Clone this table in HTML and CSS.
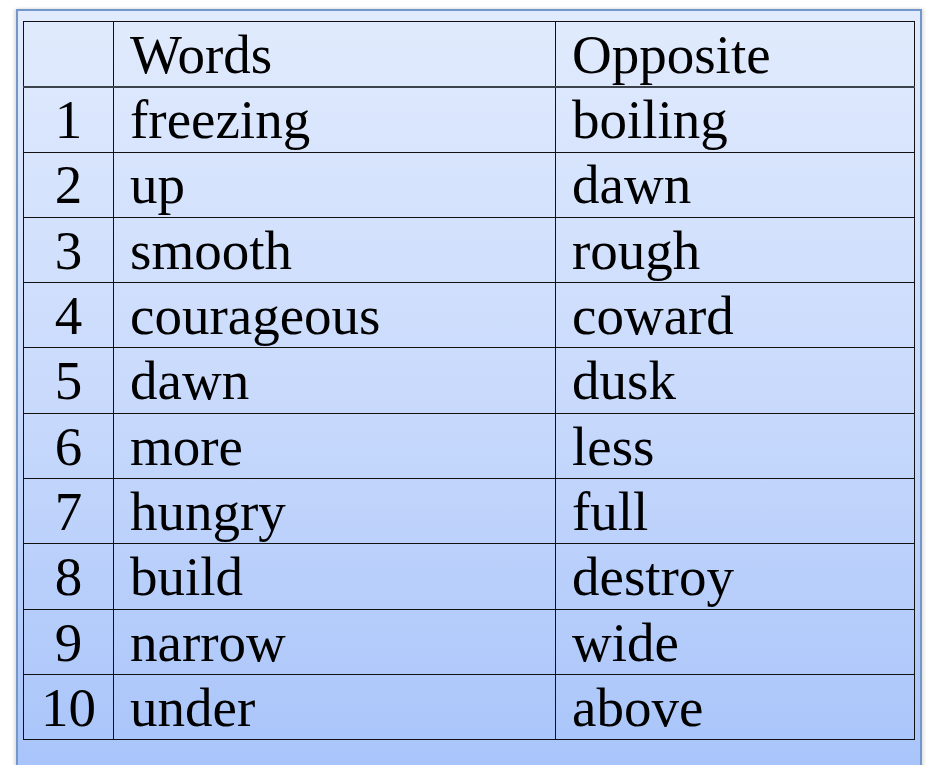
FILE: index.html
```html
<!DOCTYPE html>
<html lang="en">
<head>
<meta charset="utf-8">
<title>Words and Opposites</title>
<link rel="stylesheet" href="styles.css">
</head>
<body>
<div class="frame">
  <table class="words">
    <colgroup>
      <col class="c-num">
      <col class="c-word">
      <col class="c-opp">
    </colgroup>
    <thead>
      <tr><th class="num"></th><th>Words</th><th>Opposite</th></tr>
    </thead>
    <tbody>
      <tr><td class="num">1</td><td>freezing</td><td>boiling</td></tr>
      <tr><td class="num">2</td><td>up</td><td>dawn</td></tr>
      <tr><td class="num">3</td><td>smooth</td><td>rough</td></tr>
      <tr><td class="num">4</td><td>courageous</td><td>coward</td></tr>
      <tr><td class="num">5</td><td>dawn</td><td>dusk</td></tr>
      <tr><td class="num">6</td><td>more</td><td>less</td></tr>
      <tr><td class="num">7</td><td>hungry</td><td>full</td></tr>
      <tr><td class="num">8</td><td>build</td><td>destroy</td></tr>
      <tr><td class="num">9</td><td>narrow</td><td>wide</td></tr>
      <tr><td class="num">10</td><td>under</td><td>above</td></tr>
    </tbody>
  </table>
</div>
</body>
</html>
```
FILE: styles.css
```css
html, body {
  margin: 0;
  padding: 0;
  background: #ffffff;
  overflow: hidden;
}
.frame {
  margin: 9px 7px 0 16px;
  height: 790px;
  box-sizing: border-box;
  border: 2px solid #7497c9;
  padding: 10px 6px 0 5px;
  background: linear-gradient(to bottom, #e1ebfd 0px, #c9dafc 380px, #a8c4fa 760px);
  box-shadow: -2px 0 3px rgba(0, 0, 0, 0.12), 2px 0 3px rgba(0, 0, 0, 0.12);
}
.words {
  width: 891px;
  table-layout: fixed;
  border-collapse: collapse;
  font-family: "Liberation Serif", "Times New Roman", serif;
  font-size: 55px;
  color: #000;
  border: 1px solid #111;
}
.c-num { width: 90px; }
.c-word { width: 442px; }
.c-opp { width: 359px; }
.words tr {
  height: 65.3px;
}
.words th,
.words td {
  border: 1px solid #111;
  padding: 2px 0 0 16px;
  text-align: left;
  font-weight: normal;
  vertical-align: middle;
  white-space: nowrap;
  line-height: 1.1;
}
.words thead th {
  border-bottom: 2px solid #3c424b;
}
.words .num {
  text-align: center;
  padding-left: 0;
}
```
